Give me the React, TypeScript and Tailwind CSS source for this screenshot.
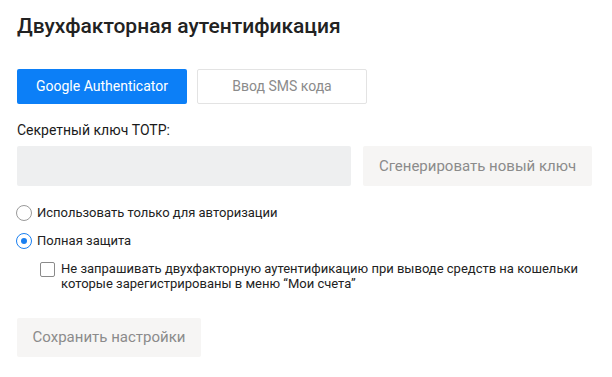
export default function App() {
  return (
    <div className="min-h-screen bg-white px-[17px] pt-[13px] font-['Roboto',sans-serif] text-[#222]">
      <h1 className="text-[21px] font-medium leading-[26px] text-[#222]">Двухфакторная аутентификация</h1>

      {/* Method tabs */}
      <div className="mt-[30px] flex gap-[10px]">
        <button className="h-[35px] w-[170px] rounded-[2px] bg-[#0c7ff7] text-[14px] text-white">
          Google Authenticator
        </button>
        <button className="h-[35px] w-[170px] rounded-[2px] border border-[#e3e3e3] bg-white text-[14px] text-[#8b8b8b]">
          Ввод SMS кода
        </button>
      </div>

      <p className="mt-[16px] text-[14px] leading-[20px] text-[#1a1a1a]">Секретный ключ TOTP:</p>
      <div className="mt-[6px] flex gap-[12px]">
        <div className="h-[40px] w-[334px] rounded-[2px] bg-[#eeeff0]" />
        <button className="h-[40px] w-[229px] rounded-[2px] bg-[#f6f5f4] text-[15px] text-[#8b8b8b]">
          Сгенерировать новый ключ
        </button>
      </div>

      {/* Radios */}
      <div className="mt-[19px] flex flex-col gap-[12px] text-[13px] leading-[16px] text-[#222]">
        <label className="flex items-center gap-[5px]">
          <span className="ml-[-1px] h-[16px] w-[16px] rounded-full border border-[#9a9a9a]" />
          <span>Использовать только для авторизации</span>
        </label>
        <label className="flex items-center gap-[5px]">
          <span className="ml-[-1px] flex h-[16px] w-[16px] items-center justify-center rounded-full border border-[#1a7ff0]">
            <span className="h-[6px] w-[6px] rounded-full bg-[#1a7ff0]" />
          </span>
          <span>Полная защита</span>
        </label>
        <label className="ml-[23px] flex items-start gap-[6px]">
          <span className="mt-[1px] h-[15px] w-[15px] shrink-0 rounded-[2px] border border-[#8a8a8a]" />
          <span className="leading-[15px]">
            Не запрашивать двухфакторную аутентификацию при выводе средств на кошельки
            <br />
            которые зарегистрированы в меню “Мои счета”
          </span>
        </label>
      </div>

      <button className="mt-[27px] h-[39px] w-[184px] rounded-[2px] bg-[#f6f5f4] text-[15px] text-[#8b8b8b]">
        Сохранить настройки
      </button>
    </div>
  );
}
